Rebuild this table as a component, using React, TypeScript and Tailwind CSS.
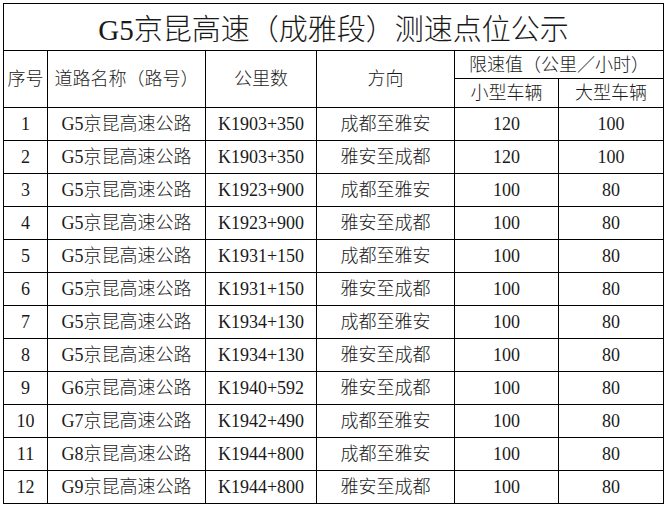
import React from "react";

type Row = {
  no: number;
  road: string;
  km: string;
  dir: string;
  small: number;
  large: number;
};

const rows: Row[] = [
  { no: 1, road: "G5京昆高速公路", km: "K1903+350", dir: "成都至雅安", small: 120, large: 100 },
  { no: 2, road: "G5京昆高速公路", km: "K1903+350", dir: "雅安至成都", small: 120, large: 100 },
  { no: 3, road: "G5京昆高速公路", km: "K1923+900", dir: "成都至雅安", small: 100, large: 80 },
  { no: 4, road: "G5京昆高速公路", km: "K1923+900", dir: "雅安至成都", small: 100, large: 80 },
  { no: 5, road: "G5京昆高速公路", km: "K1931+150", dir: "成都至雅安", small: 100, large: 80 },
  { no: 6, road: "G5京昆高速公路", km: "K1931+150", dir: "雅安至成都", small: 100, large: 80 },
  { no: 7, road: "G5京昆高速公路", km: "K1934+130", dir: "成都至雅安", small: 100, large: 80 },
  { no: 8, road: "G5京昆高速公路", km: "K1934+130", dir: "雅安至成都", small: 100, large: 80 },
  { no: 9, road: "G6京昆高速公路", km: "K1940+592", dir: "雅安至成都", small: 100, large: 80 },
  { no: 10, road: "G7京昆高速公路", km: "K1942+490", dir: "成都至雅安", small: 100, large: 80 },
  { no: 11, road: "G8京昆高速公路", km: "K1944+800", dir: "成都至雅安", small: 100, large: 80 },
  { no: 12, road: "G9京昆高速公路", km: "K1944+800", dir: "雅安至成都", small: 100, large: 80 },
];

const cell = "border border-black p-0 text-center align-middle";

const App = () => {
  return (
    <div className="h-[505px] w-[667px] overflow-hidden bg-white pl-[3px] pt-[3px] font-['Liberation_Serif','Noto_Sans_CJK_SC',serif] text-[18px] font-light leading-none text-[#1a1a1a]">
      <table className="w-[660px] table-fixed border-collapse">
        <colgroup>
          <col className="w-[44px]" />
          <col className="w-[158px]" />
          <col className="w-[111px]" />
          <col className="w-[138px]" />
          <col className="w-[104px]" />
          <col className="w-[105px]" />
        </colgroup>
        <tbody>
          <tr className="h-[47px]">
            <td colSpan={6} className={`${cell} pt-[6px] text-[29px]`}>
              G5京昆高速（成雅段）测速点位公示
            </td>
          </tr>
          <tr className="h-[28px]">
            <td rowSpan={2} className={cell}>序号</td>
            <td rowSpan={2} className={cell}>道路名称（路号）</td>
            <td rowSpan={2} className={cell}>公里数</td>
            <td rowSpan={2} className={cell}>方向</td>
            <td colSpan={2} className={cell}>限速值（公里／小时）</td>
          </tr>
          <tr className="h-[29px]">
            <td className={cell}>小型车辆</td>
            <td className={cell}>大型车辆</td>
          </tr>
          {rows.map((r) => (
            <tr key={r.no} className="h-[33px]">
              <td className={cell}>{r.no}</td>
              <td className={cell}>{r.road}</td>
              <td className={cell}>{r.km}</td>
              <td className={cell}>{r.dir}</td>
              <td className={cell}>{r.small}</td>
              <td className={cell}>{r.large}</td>
            </tr>
          ))}
        </tbody>
      </table>
    </div>
  );
};

export default App;
